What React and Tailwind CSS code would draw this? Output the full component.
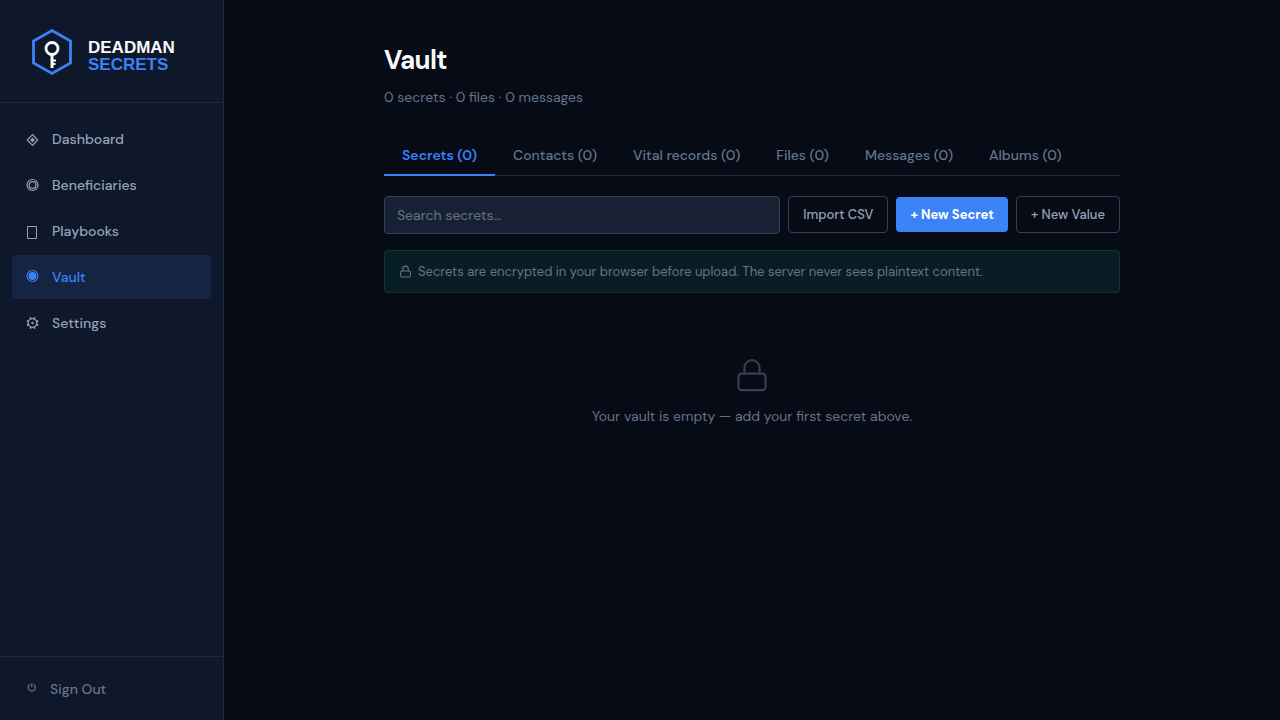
import { useState } from "react";

const navItems = ["Dashboard", "Beneficiaries", "Playbooks", "Vault", "Settings"];

const tabs = ["Secrets", "Contacts", "Vital records", "Files", "Messages", "Albums"];

function Logo() {
  return (
    <svg width="40" height="48" viewBox="0 0 40 48" fill="none" aria-hidden="true">
      <path d="M20 2.5 38.5 13v22L20 45.500 1.500 35V13Z" stroke="#3b82f6" strokeWidth="2.800" />
      <circle cx="20" cy="20.500" r="6" stroke="#f8fafc" strokeWidth="2.800" />
      <path d="M20 26.500V40" stroke="#f8fafc" strokeWidth="3" />
      <path d="M21 32.500h3M21 36h2.500" stroke="#f8fafc" strokeWidth="1.800" />
    </svg>
  );
}

function NavIcon({ name }) {
  return (
    <svg
      className="w-4 h-4 shrink-0"
      viewBox="0 0 16 16"
      fill="none"
      stroke="currentColor"
      aria-hidden="true"
    >
      {name === "Dashboard" && (
        <>
          <path d="M8.500 3.500 13.700 9 8.500 14.500 3.300 9Z" strokeWidth="1.200" />
          <path d="M8.500 6.400 10.900 9 8.500 11.600 6.100 9Z" fill="currentColor" stroke="none" />
        </>
      )}
      {name === "Beneficiaries" && (
        <>
          <circle cx="8.500" cy="8" r="5.500" strokeWidth="1.200" />
          <circle cx="8.500" cy="8" r="3.400" strokeWidth="1.200" />
        </>
      )}
      {name === "Playbooks" && <path d="M3.500 3.500h9v12h-9Z" />}
      {name === "Vault" && (
        <>
          <circle cx="8.500" cy="7" r="5.500" strokeWidth="1.200" />
          <circle cx="8.500" cy="7" r="4" fill="currentColor" stroke="none" />
        </>
      )}
      {name === "Settings" && (
        <>
          <circle cx="8.500" cy="8" r="4.300" strokeWidth="1.300" />
          <circle cx="8.500" cy="8" r="1.200" fill="currentColor" stroke="none" />
          {/* Gear teeth */}
          <path
            d="M6.900 4 6.300 2.300M10.100 4l.6-1.700M12.500 6.400l1.700-.6M12.500 9.600l1.700.6M10.100 12l.6 1.700M6.900 12l-.6 1.700M4.500 9.600l-1.700.6M4.500 6.400l-1.700-.6"
            strokeWidth="1.600"
          />
        </>
      )}
    </svg>
  );
}

function PowerIcon() {
  return (
    <svg className="w-4 h-4 shrink-0" viewBox="0 0 16 16" fill="none" stroke="currentColor" aria-hidden="true">
      <path d="M5.800 3.600a3.600 3.600 0 1 0 4 0M7.800 2v4.200" strokeWidth="1.200" />
    </svg>
  );
}

function LockIcon({ className }) {
  return (
    <svg
      className={className}
      viewBox="0 0 24 24"
      fill="none"
      stroke="currentColor"
      strokeLinecap="round"
      strokeLinejoin="round"
      aria-hidden="true"
    >
      <rect x="3" y="11" width="18" height="11" rx="2" />
      <path d="M7 11V7a5 5 0 0 1 10 0v4" />
    </svg>
  );
}

function Sidebar({ page, setPage }) {
  return (
    <aside className="w-56 shrink-0 flex flex-col bg-[#0f172a] border-r border-slate-800">
      {/* Brand */}
      <div className="flex items-center gap-4 px-8 pt-7 pb-[26px] border-b border-slate-800">
        <Logo />
        <div className="pt-2 font-['Liberation_Sans',sans-serif] font-bold text-[17px] leading-[17px]">
          <div className="text-slate-50">DEADMAN</div>
          <div className="text-[#3b82f6]">SECRETS</div>
        </div>
      </div>

      {/* Navigation */}
      <nav className="flex-1 flex flex-col gap-0.5 px-3 py-[14px]">
        {navItems.map((name) => (
          <button
            key={name}
            onClick={() => setPage(name)}
            className={`h-11 flex items-center gap-3 px-3 rounded text-sm font-medium ${
              page === name ? "bg-[#152442] text-[#3b82f6]" : "text-[#94a3b8]"
            }`}
          >
            <NavIcon name={name} />
            {name}
          </button>
        ))}
      </nav>

      {/* Sign out */}
      <div className="px-3 py-[10px] border-t border-slate-800">
        <button className="h-[43px] flex items-center gap-2.5 px-3 text-sm font-medium text-[#64748b]">
          <PowerIcon />
          Sign Out
        </button>
      </div>
    </aside>
  );
}

function App() {
  const [page, setPage] = useState("Vault");
  const [tab, setTab] = useState("Secrets");
  const [search, setSearch] = useState("");

  return (
    <div className="min-h-screen flex bg-[#060b16] font-['DM_Sans','Inter',sans-serif]">
      <Sidebar page={page} setPage={setPage} />

      <main className="flex-1 min-w-0">
        <div className="max-w-[800px] mx-auto px-8 py-10">
          <h1 className="text-[26px] leading-10 font-bold tracking-tight text-slate-50">Vault</h1>
          <p className="mt-1.5 text-sm leading-[22px] text-[#64748b]">
            0 secrets · 0 files · 0 messages
          </p>

          {/* Tabs */}
          <div className="mt-7 flex border-b border-slate-800">
            {tabs.map((name) => (
              <button
                key={name}
                onClick={() => setTab(name)}
                className={`h-10 -mb-px px-[18px] border-b-2 text-sm whitespace-nowrap ${
                  tab === name
                    ? "border-[#3b82f6] text-[#3b82f6] font-semibold"
                    : "border-transparent text-[#64748b] font-medium"
                }`}
              >
                {name} (0)
              </button>
            ))}
          </div>

          {/* Toolbar */}
          <div className="mt-5 flex items-start gap-2">
            <input
              type="text"
              aria-label="Search secrets"
              placeholder="Search secrets…"
              value={search}
              onChange={(e) => setSearch(e.target.value)}
              className="flex-1 min-w-0 h-[38px] px-3 rounded border border-slate-700 bg-[#182033] text-sm text-slate-50 placeholder:text-[#64748b]"
            />
            <div className="flex items-center gap-2">
              <button className="h-[37px] px-3.5 rounded border border-slate-700 text-[13px] font-medium text-[#94a3b8]">
                Import CSV
              </button>
              <button className="h-[35px] px-3.5 rounded bg-[#3b82f6] text-[13px] font-bold text-white">
                + New Secret
              </button>
              <button className="h-[37px] px-3.5 rounded border border-slate-700 text-[13px] font-medium text-[#94a3b8]">
                + New Value
              </button>
            </div>
          </div>

          {/* Encryption notice */}
          <div className="mt-4 h-[43px] flex items-center gap-1.5 px-3.5 rounded border border-[#0a3a37] bg-[#081e24] text-[13px] text-[#64748b]">
            <LockIcon className="w-[13px] h-[13px] stroke-2" />
            Secrets are encrypted in your browser before upload. The server never sees plaintext content.
          </div>

          {/* Empty state */}
          <div className="mt-16 flex flex-col items-center gap-3">
            <LockIcon className="w-9 h-9 stroke-[1.5] text-[#353f50]" />
            <p className="text-sm leading-[22px] text-[#64748b]">
              Your vault is empty — add your first secret above.
            </p>
          </div>
        </div>
      </main>
    </div>
  );
}

export default App;
